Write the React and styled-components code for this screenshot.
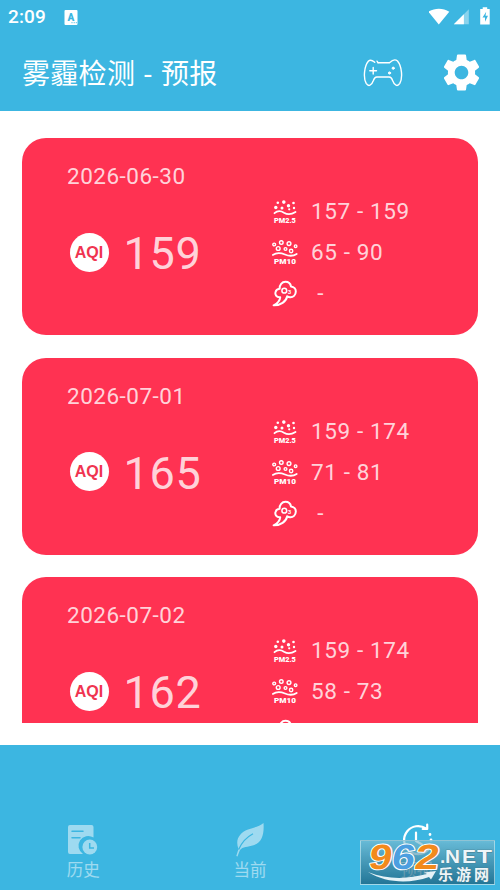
import React from 'react'
import styled, { createGlobalStyle } from 'styled-components'

const GlobalStyle = createGlobalStyle`
  * { box-sizing: border-box; }
  body {
    margin: 0;
    overflow: hidden;
    background: #fff;
    font-family: Roboto, "Noto Sans CJK SC", sans-serif;
  }
  svg { display: block; flex: none; }
`

const Screen = styled.div`
  position: relative;
  width: 500px;
  height: 890px;
  display: flex;
  flex-direction: column;
  overflow: hidden;
`
const Header = styled.header`
  height: 111px;
  flex: none;
  background: #3cb6e1;
  color: #fff;
`
const StatusBar = styled.div`
  height: 34px;
  padding: 0 8px;
  display: flex;
  align-items: center;
`
const Clock = styled.span`
  width: 56px;
  font-size: 19px;
  font-weight: 500;
  line-height: 36px;
  letter-spacing: 0.1px;
`
const StatusIcons = styled.div`
  margin-left: auto;
  display: flex;
  align-items: center;
`
const TitleBar = styled.div`
  height: 77px;
  padding: 0 20px 0 22px;
  display: flex;
  align-items: center;
`
const Title = styled.h1`
  margin: 4px 0 0;
  flex: 1;
  font-size: 28px;
  font-weight: 400;
  line-height: 40px;
  letter-spacing: 0.3px;
  word-spacing: 1.6px;
  white-space: pre;
`
const Actions = styled.div`
  display: flex;
  align-items: center;
  gap: 40px;
`
const List = styled.main`
  height: 612px;
  flex: none;
  padding: 27px 22px 0;
  overflow: hidden;
`
const Card = styled.section`
  height: 197.3px;
  margin-bottom: 22.3px;
  padding: 0 45px;
  border-radius: 24px;
  display: flex;
  background: #ff3252;
  color: rgba(255, 255, 255, 0.8);
`
const Summary = styled.div`
  width: 205px;
  padding-top: 24px;
`
const DateText = styled.div`
  font-size: 22.5px;
  line-height: 28px;
  letter-spacing: 0.5px;
`
const Aqi = styled.div`
  margin-top: 37px;
  padding-left: 2.5px;
  display: flex;
  align-items: center;
`
const AqiBadge = styled.span`
  width: 39px;
  height: 39px;
  border-radius: 50%;
  margin-top: -4px;
  background: #fff;
  color: #f03450;
  font: bold 16px/39px "Liberation Sans", sans-serif;
  text-align: center;
`
const AqiValue = styled.span`
  margin-left: 15px;
  font-size: 45px;
  line-height: 54px;
  letter-spacing: 0.7px;
`
const Details = styled.div`
  padding-top: 53px;
`
const Detail = styled.div`
  height: 41px;
  display: flex;
  align-items: center;
  font-size: 22.5px;
  line-height: 41px;
  letter-spacing: 0.6px;
  white-space: pre;

  svg { margin-right: 13px; }
`
const Nav = styled.nav`
  flex: 1;
  margin-top: 22px;
  padding-top: 77px;
  display: flex;
  background: #3cb6e1;
`
const NavItem = styled.div`
  flex: 1;
  display: flex;
  flex-direction: column;
  align-items: center;
  color: #fff;
  font-size: 16.5px;
  line-height: 26px;
  opacity: ${(p) => (p.$active ? 1 : 0.5)};
`
const Watermark = styled.div`
  position: absolute;
  left: 360px;
  top: 840px;
  width: 135px;
  height: 45px;
  border: 1px solid rgba(190, 230, 240, 0.7);
  background: linear-gradient(rgba(126, 188, 208, 0.65), rgba(28, 100, 130, 0.78));
`

const stroke = { fill: 'none', stroke: '#fff', strokeLinecap: 'round', strokeLinejoin: 'round' }

const KeyboardIcon = () => (
  <svg width="14" height="15" viewBox="0 0 14 15">
    <rect x="0.5" y="0" width="13" height="15" rx="1" fill="#fff" />
    <text x="7" y="10.5" textAnchor="middle" fontFamily="Roboto" fontSize="10" fontWeight="900" fill="#3cb6e1">A</text>
    <path d="M7.5 12.7h1M9.7 12.7h1M11.8 12.7h1" stroke="#3cb6e1" />
  </svg>
)

const SignalIcons = () => (
  <svg width="63" height="20" viewBox="0 0 63 20" fill="#fff">
    <path d="M-0.7 4.7C5.5 0.6 14.1 0.6 20.3 4.7L9.8 17.5Z" />
    <path d="M39.8 2.2V17.3H24.8Z" opacity="0.4" />
    <path d="M34.9 7.2V17.3H24.8Z" />
    <path d="M53.7 0.2h4.5v1.9h2.5v15.4h-9.5V2.1h2.5Z" />
    <path d="M57.2 4.8L53.5 10.5H56V14.8L59 8.8H56.5Z" fill="#3cb6e1" />
  </svg>
)

const GamepadIcon = () => (
  <svg width="40" height="30" viewBox="0 0 40 30" {...stroke} strokeWidth="1.4">
    <path d="M15 4.7H26.5C28.8 2.5 32 0.8 34.5 3C38.7 8 40 19.5 36.8 25.3C34.4 29.1 31.4 27.5 29.6 22.5C28.7 19.8 28 19 26.2 19H13.8C12 19 11.3 19.8 10.4 22.5C8.6 27.5 5.6 29.1 3.2 25.3C0 19.5 1.3 8 5.5 3C8 0.8 10.2 3 11.7 4.3" />
    <path d="M14 3.2L15 4.7M6.8 12.8H13.5M10.2 9.5V16.1" />
    <circle cx="26.5" cy="15" r="1.1" fill="#fff" strokeWidth="1" />
    <circle cx="30.2" cy="10.2" r="1.1" fill="#fff" strokeWidth="1" />
  </svg>
)

const GearIcon = () => (
  <svg width="37" height="37" viewBox="2.2 2.2 19.6 19.6" fill="#fff">
    <path d="M19.14 12.94c.04-.3.06-.61.06-.94s-.02-.64-.07-.94l2.03-1.58c.18-.14.23-.41.12-.61l-1.92-3.32c-.12-.22-.37-.29-.59-.22l-2.39.96c-.5-.38-1.03-.7-1.62-.94l-.36-2.54c-.04-.24-.24-.41-.48-.41h-3.84c-.24 0-.43.17-.47.41l-.36 2.54c-.59.24-1.13.57-1.62.94l-2.39-.96c-.22-.08-.47 0-.59.22L2.74 8.87c-.12.21-.08.47.12.61l2.03 1.58c-.05.3-.09.63-.09.94s.02.64.07.94l-2.03 1.58c-.18.14-.23.41-.12.61l1.92 3.32c.12.22.37.29.59.22l2.39-.96c.5.38 1.03.7 1.62.94l.36 2.54c.05.24.24.41.48.41h3.84c.24 0 .44-.17.47-.41l.36-2.54c.59-.24 1.13-.56 1.62-.94l2.39.96c.22.08.47 0 .59-.22l1.92-3.32c.12-.22.07-.47-.12-.61l-2.01-1.58zM12 15.6c-1.98 0-3.6-1.62-3.6-3.6s1.62-3.6 3.6-3.6 3.6 1.62 3.6 3.6-1.62 3.6-3.6 3.6z" />
  </svg>
)

const PmLabel = ({ children }) => (
  <text x="12.9" y="24.8" textAnchor="middle" textLength="22" lengthAdjust="spacingAndGlyphs" fontFamily="Roboto" fontSize="8" fontWeight="900" fill="#fff" letterSpacing="0">
    {children}
  </text>
)

const Pm25Icon = () => (
  <svg width="26" height="27" viewBox="0 0 26 27">
    <g fill="#fff">
      <circle cx="3.8" cy="9.5" r="1.7" />
      <circle cx="5.8" cy="4.8" r="1.3" />
      <circle cx="11.8" cy="4.1" r="1.8" />
      <circle cx="10" cy="10" r="1.5" />
      <circle cx="16.5" cy="7.7" r="1.7" />
      <circle cx="21.5" cy="5" r="1.3" />
      <circle cx="22" cy="10" r="1.2" />
      <circle cx="17.2" cy="11.3" r="1.1" />
    </g>
    <path d="M2.5 15.2C6 11.9 9 12.7 12 14.7C16 17.2 20 16.2 23.5 14" {...stroke} strokeWidth="1.8" />
    <PmLabel>PM2.5</PmLabel>
  </svg>
)

const Pm10Icon = () => (
  <svg width="26" height="27" viewBox="0 0 26 27">
    <g fill="none" stroke="#fff" strokeWidth="1.4">
      <circle cx="2.2" cy="5.5" r="1.4" />
      <circle cx="9.3" cy="3.6" r="1.8" />
      <circle cx="17" cy="4.6" r="1.9" />
      <circle cx="23.6" cy="7.2" r="1.3" />
      <circle cx="6.2" cy="9.5" r="1.9" />
      <circle cx="13.5" cy="10" r="1.4" />
      <circle cx="19.1" cy="12" r="1.7" />
    </g>
    <path d="M0.8 15.9C5 13.1 9 13.8 13 15.5C17 17.2 21 17.4 24.7 14.9" {...stroke} strokeWidth="1.8" />
    <PmLabel>PM10</PmLabel>
  </svg>
)

const OzoneIcon = () => (
  <svg width="26" height="27" viewBox="0 0 26 27">
    <path d="M1.6 25.3C6 23.3 8 20.5 8.2 17.3C4.2 17.6 2.8 14.5 3.5 12C4 10 5.5 8.9 7.6 8.7C7.4 4.8 10 1.8 13.4 1.8C16.5 1.8 18.5 3.6 19 6.5C22 6.8 24 9 23.8 11.8C23.6 15.3 21.3 17.4 18 17.2C16.8 17.2 16 16.8 15.2 16.2C14.2 21.5 8.5 25.5 1.6 25.3Z" {...stroke} strokeWidth="2" />
    <circle cx="12.3" cy="10.7" r="2.4" {...stroke} strokeWidth="1.5" />
    <text x="15.7" y="13.5" fontFamily="Roboto" fontSize="6" fontWeight="700" fill="#fff" letterSpacing="0">3</text>
  </svg>
)

const HistoryIcon = () => (
  <svg width="34" height="36" viewBox="0 0 34 36">
    <path d="M4 3H25.5Q27.5 3 27.5 5V15.5A9 9 0 0 0 17 32H4Q2 32 2 30V5Q2 3 4 3Z" fill="#fff" />
    <path d="M6 9.3H17M6 15.7H14" stroke="#3cb6e1" strokeWidth="1.5" strokeLinecap="round" />
    <circle cx="23.8" cy="25" r="7.4" fill="#fff" />
    <path d="M23.7 21V26H28" fill="none" stroke="#3cb6e1" strokeWidth="1.5" />
  </svg>
)

const LeafIcon = () => (
  <svg width="34" height="36" viewBox="0 0 34 36">
    <path d="M30.5 1C31.3 12 29 20.5 20.5 23.2C15 25 9.5 24.5 7 28Q5.7 31 4.5 34.5L3.3 34Q4.5 30 5.5 27C2 18 6 11 15 7.5C21.5 5.2 26.5 4.5 30.5 1Z" fill="#fff" />
    <path d="M5.6 27.6C9 19.8 14 15 20 11.8" fill="none" stroke="#3cb6e1" strokeWidth="1.3" />
  </svg>
)

const ForecastIcon = () => (
  <svg width="34" height="36" viewBox="0 0 34 36" {...stroke} strokeWidth="2.2">
    <path d="M26 6.5A14 14 0 1 0 28 28" />
    <path d="M22.7 7H27.2V2.7M16 10.5V19L22 22.5" />
    <path d="M30 12.5v.1M31 18v.1M30.5 23.5v.1" strokeWidth="2.8" />
  </svg>
)

const SiteLogo = () => (
  <svg width="133" height="43" viewBox="0 0 133 43">
    <g transform="skewX(-9)" fontFamily="Liberation Sans" fontWeight="bold" fontSize="35" stroke="#fff" strokeWidth="2" paintOrder="stroke" strokeLinejoin="round">
      <text x="11" y="28" textLength="23" lengthAdjust="spacingAndGlyphs" fill="#f28a1c">9</text>
      <text x="34" y="28" textLength="23" lengthAdjust="spacingAndGlyphs" fill="#4c9fe0">6</text>
      <text x="57" y="28" textLength="24" lengthAdjust="spacingAndGlyphs" fill="#f28a1c">2</text>
    </g>
    <path d="M7 31C27 39 47 38 66 33L63 31.5L75 30L70 38.5L68 36C48 43 25 42 7 31Z" fill="#e5f2f7" />
    <g fill="#eef5f8" stroke="#477989" strokeWidth="0.7" paintOrder="stroke">
      <text x="79" y="21.5" fontFamily="Liberation Sans" fontSize="19" fontWeight="bold">.</text>
      <text x="84" y="21.5" textLength="15" lengthAdjust="spacingAndGlyphs" fontFamily="Liberation Sans" fontSize="19" fontWeight="bold">N</text>
      <text x="101" y="21.5" textLength="14" lengthAdjust="spacingAndGlyphs" fontFamily="Liberation Sans" fontSize="19" fontWeight="bold">E</text>
      <text x="116" y="21.5" textLength="15" lengthAdjust="spacingAndGlyphs" fontFamily="Liberation Sans" fontSize="19" fontWeight="bold">T</text>
      <text x="77" y="38.5" textLength="51" fontFamily="Noto Sans CJK SC" fontSize="15" fontWeight="bold">乐游网</text>
    </g>
  </svg>
)

const forecasts = [
  { date: '2026-06-30', aqi: 159, pm25: '157 - 159', pm10: '65 - 90', o3: ' -' },
  { date: '2026-07-01', aqi: 165, pm25: '159 - 174', pm10: '71 - 81', o3: ' -' },
  { date: '2026-07-02', aqi: 162, pm25: '159 - 174', pm10: '58 - 73', o3: ' -' },
]

const ForecastCard = ({ item }) => (
  <Card>
    <Summary>
      <DateText>{item.date}</DateText>
      <Aqi>
        <AqiBadge>AQI</AqiBadge>
        <AqiValue>{item.aqi}</AqiValue>
      </Aqi>
    </Summary>
    <Details>
      <Detail><Pm25Icon />{item.pm25}</Detail>
      <Detail><Pm10Icon />{item.pm10}</Detail>
      <Detail><OzoneIcon />{item.o3}</Detail>
    </Details>
  </Card>
)

const App = () => {
  return (
    <Screen>
      <GlobalStyle />
      <Header>
        <StatusBar>
          <Clock>2:09</Clock>
          <KeyboardIcon />
          <StatusIcons><SignalIcons /></StatusIcons>
        </StatusBar>
        <TitleBar>
          <Title>雾霾检测 - 预报</Title>
          <Actions>
            <GamepadIcon />
            <GearIcon />
          </Actions>
        </TitleBar>
      </Header>
      <List>
        {forecasts.map((item) => <ForecastCard key={item.date} item={item} />)}
      </List>
      <Nav>
        <NavItem><HistoryIcon />历史</NavItem>
        <NavItem><LeafIcon />当前</NavItem>
        <NavItem $active><ForecastIcon />预报</NavItem>
      </Nav>
      <Watermark><SiteLogo /></Watermark>
    </Screen>
  )
}

export default App
